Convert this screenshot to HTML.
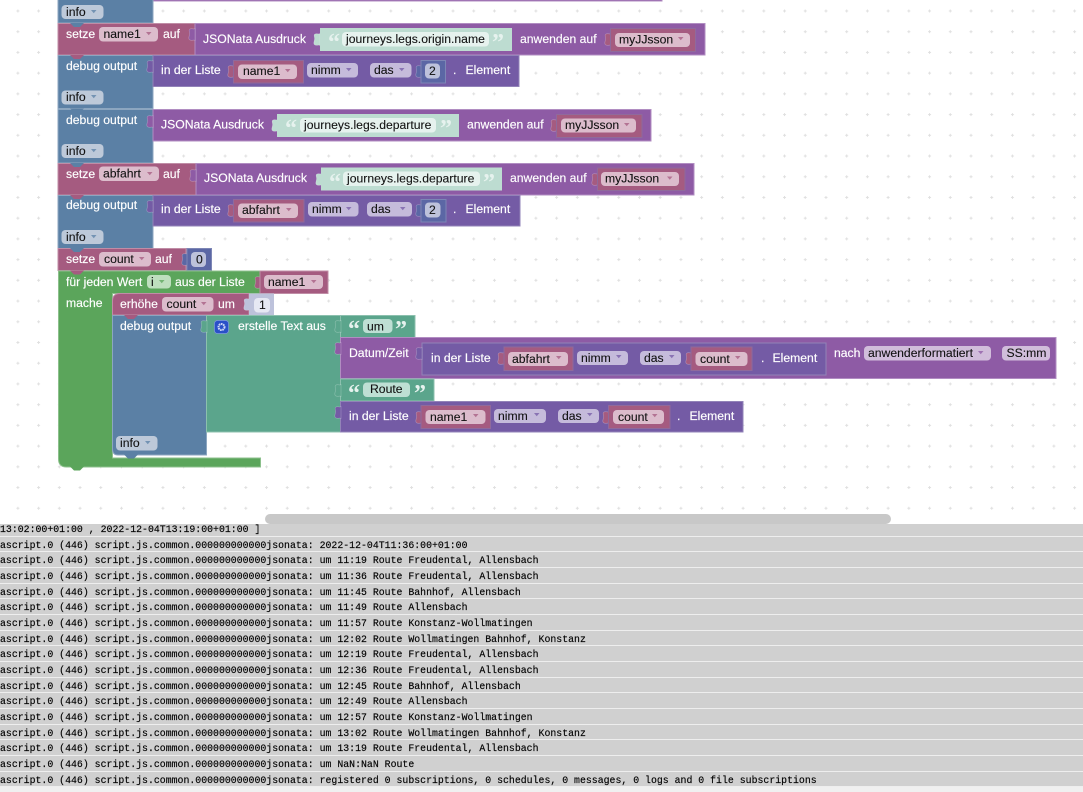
<!DOCTYPE html>
<html><head><meta charset="utf-8">
<style>
html,body{margin:0;padding:0;background:#fff;width:1083px;height:792px;overflow:hidden}
svg{position:absolute;left:0;top:0}
svg text{font-family:"Liberation Sans",Arial,sans-serif;font-size:12.2px}
.t{fill:#fff;stroke:#fff;stroke-width:.15}.d{fill:#111;stroke:#111;stroke-width:.1}
.q{font-family:"Liberation Serif",serif!important;font-size:24px!important;font-weight:bold;fill:#e6f2ee}
.pk{fill:#a55b80;stroke:#c08da6;stroke-width:1}
.pu{fill:#8e5ba5;stroke:#b18dc2;stroke-width:1}
.in{fill:#745ba5;stroke:#9283b8;stroke-width:1}
.bl{fill:#5b80a5;stroke:#8ca6c0;stroke-width:1}
.gr{fill:#5ba55b;stroke:#8cc08c;stroke-width:1}
.te{fill:#5ba58c;stroke:#8cc0ae;stroke-width:1}
.nu{fill:#5b67a5;stroke:#7d86b5;stroke-width:1}
.v{stroke:#8f6a9c}
.st{fill:#bddcd1}
.fs{fill:#e6f2ee}
.fp{fill:#dcbccc}
.fi{fill:#c5bbdb}
.fb{fill:#bdc9d9}
.fu{fill:#d1bddb}
use[href="#tab"]{stroke:rgba(255,255,255,.3);stroke-width:.6}
use[href="#arr"]{opacity:.75}
#log{position:absolute;left:0;top:524px;width:1083px;height:268px;overflow:hidden;background:#f0f0f0}
#log div div{height:14.67px;border-bottom:1px solid #eee;background:#d0d0d0;white-space:pre;font:9.84px/17px "Liberation Mono",monospace;letter-spacing:.02px;color:#000;-webkit-text-stroke:.15px #000}
#in{margin-top:-2.9px}
#sb{position:absolute;left:265px;top:514px;width:626px;height:10px;border-radius:5px;background:#c8c8c8}
</style></head><body>
<svg width="1083" height="792" viewBox="0 0 1083 792" xmlns="http://www.w3.org/2000/svg">
<defs>
<pattern id="g" x="16.4" y="9.5" width="20.72" height="20.72" patternUnits="userSpaceOnUse">
<path d="M0 1.5H3M1.5 0V3" stroke="#e0e0e0" stroke-width="1" fill="none"/>
</pattern>
<path id="tab" d="M7 0C7 2 4 0 2 1C0 2 2 4 1.5 6.500C1 9 0 11 2 12C4 13 7 11 7 13Z"/>
<path id="arr" d="M0 0H5.500L2.750 3.200Z"/>
<path id="nt" d="M0 0L4 4H10L14 0Z"/>
</defs>
<rect width="1083" height="524" fill="#fff"/>
<rect width="1083" height="524" fill="url(#g)"/>

<!-- top strip -->
<rect x="153" y="-5" width="509" height="6" class="pu"/>
<rect x="58" y="-5" width="95" height="28" class="bl"/>
<rect x="61.500" y="5" width="42" height="14" rx="4" class="fb"/><text x="66" y="16" class="d">info</text><use href="#arr" x="91" y="10" fill="#5b80a5"/>

<!-- Row A -->
<rect x="58" y="23.500" width="137" height="31.500" class="pk"/>
<rect x="195" y="23.500" width="510" height="31.500" class="pu"/>
<use href="#nt" x="70" y="23" fill="#5b80a5"/>
<text x="66" y="38" class="t">setze</text>
<rect x="99" y="27" width="59" height="14.500" rx="4" class="fp"/><text x="103.500" y="38" class="d">name1</text><use href="#arr" x="146" y="32" fill="#a55b80"/>
<text x="163" y="38" class="t">auf</text>
<use href="#tab" x="188" y="28" fill="#8e5ba5"/>
<text x="203" y="43" class="t">JSONata Ausdruck</text>
<use href="#tab" x="313" y="33" fill="#bddcd1"/>
<rect x="320" y="28" width="192" height="23" class="st"/>
<text x="328" y="50" class="q" style="fill:#e6f2ee">“</text>
<rect x="342" y="32" width="147" height="14.500" rx="4" class="fs"/><text x="346" y="43" class="d">journeys.legs.origin.name</text>
<text x="492" y="50" class="q">”</text>
<text x="520" y="43" class="t">anwenden auf</text>
<use href="#tab" x="604" y="33" fill="#a55b80"/>
<rect x="610.500" y="28.500" width="85" height="23" class="pk v"/>
<rect x="615" y="33" width="75" height="14" rx="4" class="fp"/><text x="619" y="43.500" class="d">myJJsson</text><use href="#arr" x="678" y="37" fill="#a55b80"/>

<!-- Row B -->
<rect x="58" y="55.500" width="95" height="53" class="bl"/>
<use href="#nt" x="70" y="55" fill="#a55b80"/>
<text x="66" y="70" class="t">debug output</text>
<rect x="153" y="55.500" width="366" height="31" class="in"/>
<use href="#tab" x="146" y="60" fill="#745ba5"/>
<text x="161" y="74" class="t">in der Liste</text>
<use href="#tab" x="227" y="65" fill="#a55b80"/>
<rect x="233.500" y="60.500" width="70" height="22.500" class="pk v"/>
<rect x="238" y="64.500" width="59" height="14.500" rx="4" class="fp"/><text x="243" y="75" class="d">name1</text><use href="#arr" x="285" y="69" fill="#a55b80"/>
<rect x="307" y="63" width="51" height="14.500" rx="4" class="fi"/><text x="311" y="74" class="d">nimm</text><use href="#arr" x="346" y="68" fill="#745ba5"/>
<rect x="370" y="63" width="41.500" height="14.500" rx="4" class="fi"/><text x="374" y="74" class="d">das</text><use href="#arr" x="399" y="68" fill="#745ba5"/>
<use href="#tab" x="415" y="65" fill="#5b67a5"/>
<rect x="421" y="60.500" width="24.500" height="22.500" class="nu"/>
<rect x="425" y="63.500" width="15" height="15" rx="4" fill="#bdc2db"/><text x="429" y="75" class="d">2</text>
<text x="453" y="74" class="t">.</text><text x="465.500" y="74" class="t">Element</text>

<rect x="61.500" y="90.500" width="42" height="14" rx="4" class="fb"/><text x="66" y="101" class="d">info</text><use href="#arr" x="91" y="95" fill="#5b80a5"/>

<!-- Row C -->
<rect x="58" y="109.500" width="95" height="53.500" class="bl"/>
<rect x="153" y="109.500" width="498" height="31.500" class="pu"/>
<use href="#nt" x="70" y="108.500" fill="#5b80a5"/>
<text x="66" y="124" class="t">debug output</text>
<use href="#tab" x="146" y="115" fill="#8e5ba5"/>
<text x="161" y="128.500" class="t">JSONata Ausdruck</text>
<use href="#tab" x="271" y="119" fill="#bddcd1"/>
<rect x="277" y="114" width="182" height="23" class="st"/>
<text x="285" y="136" class="q">“</text>
<rect x="300" y="118" width="136" height="14.500" rx="4" class="fs"/><text x="304" y="129" class="d">journeys.legs.departure</text>
<text x="440" y="136" class="q">”</text>
<text x="467" y="128.500" class="t">anwenden auf</text>
<use href="#tab" x="550" y="119" fill="#a55b80"/>
<rect x="556.500" y="114.500" width="85.500" height="23" class="pk v"/>
<rect x="561" y="118.500" width="75" height="14" rx="4" class="fp"/><text x="565" y="129" class="d">myJJsson</text><use href="#arr" x="624" y="123" fill="#a55b80"/>

<rect x="61.500" y="144" width="42" height="14" rx="4" class="fb"/><text x="66" y="155" class="d">info</text><use href="#arr" x="91" y="149" fill="#5b80a5"/>

<!-- Row D -->
<rect x="58" y="163.500" width="138" height="31.500" class="pk"/>
<rect x="196" y="163.500" width="498" height="31.500" class="pu"/>
<use href="#nt" x="70" y="163" fill="#5b80a5"/>
<text x="66" y="178" class="t">setze</text>
<rect x="99" y="166.500" width="60" height="14.500" rx="4" class="fp"/><text x="103" y="177.500" class="d">abfahrt</text><use href="#arr" x="147" y="172" fill="#a55b80"/>
<text x="163" y="178" class="t">auf</text>
<use href="#tab" x="189" y="169" fill="#8e5ba5"/>
<text x="204" y="182" class="t">JSONata Ausdruck</text>
<use href="#tab" x="315" y="173" fill="#bddcd1"/>
<rect x="321" y="167.500" width="181" height="23" class="st"/>
<text x="329" y="190" class="q">“</text>
<rect x="343" y="171.500" width="137" height="14.500" rx="4" class="fs"/><text x="347" y="182.500" class="d">journeys.legs.departure</text>
<text x="483" y="190" class="q">”</text>
<text x="510" y="182" class="t">anwenden auf</text>
<use href="#tab" x="591" y="173" fill="#a55b80"/>
<rect x="597.500" y="168" width="87.500" height="22.500" class="pk v"/>
<rect x="601" y="172" width="78" height="14" rx="4" class="fp"/><text x="605" y="182.500" class="d">myJJsson</text><use href="#arr" x="667" y="176.500" fill="#a55b80"/>

<!-- Row E -->
<rect x="58" y="195.500" width="95" height="53" class="bl"/>
<use href="#nt" x="70" y="195" fill="#a55b80"/>
<text x="66" y="209" class="t">debug output</text>
<rect x="153" y="195.500" width="367" height="30.500" class="in"/>
<use href="#tab" x="146" y="200" fill="#745ba5"/>
<text x="161" y="213" class="t">in der Liste</text>
<use href="#tab" x="227" y="204" fill="#a55b80"/>
<rect x="233.500" y="199.500" width="70.500" height="22.500" class="pk v"/>
<rect x="238" y="203.500" width="60" height="14.500" rx="4" class="fp"/><text x="242" y="214" class="d">abfahrt</text><use href="#arr" x="286" y="208" fill="#a55b80"/>
<rect x="308" y="202" width="50.500" height="14.500" rx="4" class="fi"/><text x="312" y="213" class="d">nimm</text><use href="#arr" x="346" y="207" fill="#745ba5"/>
<rect x="367" y="202" width="45" height="14.500" rx="4" class="fi"/><text x="371" y="213" class="d">das</text><use href="#arr" x="400" y="207" fill="#745ba5"/>
<use href="#tab" x="415" y="204" fill="#5b67a5"/>
<rect x="421" y="199.500" width="25" height="22.500" class="nu"/>
<rect x="425" y="202.500" width="15.500" height="15" rx="4" fill="#bdc2db"/><text x="429" y="214" class="d">2</text>
<text x="453" y="213" class="t">.</text><text x="465.500" y="213" class="t">Element</text>

<rect x="61.500" y="230" width="42" height="14" rx="4" class="fb"/><text x="66" y="241" class="d">info</text><use href="#arr" x="91" y="235" fill="#5b80a5"/>

<!-- Row F -->
<rect x="58" y="248.500" width="128" height="22" class="pk"/>
<use href="#nt" x="70" y="248" fill="#5b80a5"/>
<text x="66" y="263" class="t">setze</text>
<rect x="99" y="252" width="52" height="14.500" rx="4" class="fp"/><text x="104" y="263" class="d">count</text><use href="#arr" x="139" y="257" fill="#a55b80"/>
<text x="155" y="263" class="t">auf</text>
<use href="#tab" x="181" y="253" fill="#5b67a5"/>
<rect x="187" y="248.500" width="24.500" height="22" class="nu"/>
<rect x="191" y="252" width="15" height="15" rx="4" fill="#bdc2db"/><text x="196" y="263.500" class="d">0</text>

<!-- Loop -->
<path d="M58.500 271H260.500V293.500H112.500V458H260.500V467H66.500Q58.500 467 58.500 459Z" class="gr"/>
<use href="#nt" x="70" y="270.500" fill="#a55b80"/>
<use href="#nt" x="70" y="466.500" fill="#5ba55b"/>
<text x="66" y="286" class="t">für jeden Wert</text>
<rect x="147" y="275" width="24" height="13.500" rx="4" fill="#bedfbe"/><text x="151" y="286" class="d">i</text><use href="#arr" x="159" y="280" fill="#5ba55b"/>
<text x="175" y="286" class="t">aus der Liste</text>
<use href="#tab" x="254" y="276" fill="#a55b80"/>
<rect x="260" y="271" width="68" height="22.500" class="pk"/>
<rect x="264" y="275" width="59" height="14" rx="4" class="fp"/><text x="268" y="286" class="d">name1</text><use href="#arr" x="311" y="280" fill="#a55b80"/>
<text x="66" y="307" class="t">mache</text>

<!-- erhöhe -->
<path d="M112.500 301Q112.500 293.500 120 293.500H249V315H112.500Z" class="pk"/>
<text x="120" y="308" class="t">erhöhe</text>
<rect x="162" y="297" width="51.500" height="14.500" rx="4" class="fp"/><text x="166.500" y="308" class="d">count</text><use href="#arr" x="201" y="302" fill="#a55b80"/>
<text x="218" y="308" class="t">um</text>
<use href="#tab" x="243" y="298" fill="#bdc2db"/>
<rect x="249" y="293.500" width="25" height="22" fill="#bdc2db"/>
<rect x="254" y="298" width="16" height="14.500" rx="4" fill="#e6e8f3"/><text x="259" y="309" class="d">1</text>

<!-- debug inner -->
<path d="M112.500 315.500H206.500V455H118Q112.500 455 112.500 449Z" class="bl"/>
<use href="#nt" x="124" y="315" fill="#a55b80"/>
<use href="#nt" x="124" y="454.500" fill="#5b80a5"/>
<text x="120" y="330" class="t">debug output</text>
<rect x="116" y="436" width="41.500" height="14.500" rx="4" class="fb"/><text x="120" y="447" class="d">info</text><use href="#arr" x="145" y="441" fill="#5b80a5"/>

<!-- text join -->
<rect x="206.500" y="315.500" width="134" height="116.500" class="te"/>
<use href="#tab" x="200" y="320" fill="#5ba58c"/>
<rect x="214.500" y="320.500" width="14" height="13" rx="3" fill="#2a50c8" stroke="#7f97e0" stroke-width="0.700"/>
<circle cx="221.500" cy="327" r="3" fill="none" stroke="#cfdaf7" stroke-width="2" stroke-dasharray="1.600 0.600"/>
<text x="238" y="330" class="t">erstelle Text aus</text>

<rect x="340.500" y="315.500" width="74.500" height="22" class="te"/>
<use href="#tab" x="334" y="320" fill="#5ba58c"/>
<text x="348" y="337" class="q" style="fill:#e6f2ee">“</text>
<rect x="363" y="319" width="29.500" height="14" rx="4" fill="#bedfd4"/><text x="367" y="330.500" class="d">um</text>
<text x="395" y="337" class="q">”</text>

<rect x="340.500" y="337.500" width="715.500" height="41" class="pu"/>
<use href="#tab" x="334" y="342" fill="#8e5ba5"/>
<text x="349" y="357" class="t">Datum/Zeit</text>
<rect x="422" y="343" width="404" height="32" class="in"/>
<use href="#tab" x="415" y="347" fill="#745ba5"/>
<text x="431" y="362" class="t">in der Liste</text>
<use href="#tab" x="497" y="352" fill="#a55b80"/>
<rect x="504" y="347" width="69" height="23.500" class="pk v"/>
<rect x="508" y="352" width="60" height="14" rx="4" class="fp"/><text x="512" y="363" class="d">abfahrt</text><use href="#arr" x="556" y="356" fill="#a55b80"/>
<rect x="577" y="351" width="51" height="14" rx="4" class="fi"/><text x="581" y="362" class="d">nimm</text><use href="#arr" x="616" y="355" fill="#745ba5"/>
<rect x="640" y="351" width="41" height="14" rx="4" class="fi"/><text x="644" y="362" class="d">das</text><use href="#arr" x="669" y="355" fill="#745ba5"/>
<use href="#tab" x="685" y="352" fill="#a55b80"/>
<rect x="691" y="347" width="61" height="23.500" class="pk v"/>
<rect x="695.500" y="352" width="52" height="14" rx="4" class="fp"/><text x="700" y="363" class="d">count</text><use href="#arr" x="735" y="356" fill="#a55b80"/>
<text x="761" y="362" class="t">.</text><text x="772.500" y="362" class="t">Element</text>
<text x="834" y="357" class="t">nach</text>
<rect x="864" y="346" width="127" height="14.500" rx="4" class="fu"/><text x="868" y="357" class="d">anwenderformatiert</text><use href="#arr" x="978" y="351" fill="#8e5ba5"/>
<rect x="1002" y="346" width="48" height="14.500" rx="4" class="fu"/><text x="1006.500" y="357" class="d">SS:mm</text>

<rect x="340.500" y="379" width="93.500" height="22" class="te"/>
<use href="#tab" x="334" y="384" fill="#5ba58c"/>
<text x="348" y="401" class="q">“</text>
<rect x="363" y="382.500" width="47" height="14.500" rx="4" fill="#bedfd4"/><text x="370" y="393" class="d">Route</text>
<text x="414" y="401" class="q">”</text>

<rect x="340.500" y="401.500" width="402.500" height="30.500" class="in"/>
<use href="#tab" x="334" y="406" fill="#745ba5"/>
<text x="349" y="420" class="t">in der Liste</text>
<use href="#tab" x="415" y="411" fill="#a55b80"/>
<rect x="421" y="405.500" width="69.500" height="23" class="pk v"/>
<rect x="425.500" y="410" width="60" height="14" rx="4" class="fp"/><text x="430" y="421" class="d">name1</text><use href="#arr" x="473" y="414" fill="#a55b80"/>
<rect x="494" y="409" width="52" height="14" rx="4" class="fi"/><text x="498" y="420" class="d">nimm</text><use href="#arr" x="534" y="413" fill="#745ba5"/>
<rect x="558" y="409" width="41" height="14" rx="4" class="fi"/><text x="562" y="420" class="d">das</text><use href="#arr" x="587" y="413" fill="#745ba5"/>
<use href="#tab" x="602" y="411" fill="#a55b80"/>
<rect x="608.500" y="405.500" width="61.500" height="23" class="pk v"/>
<rect x="613" y="410" width="51" height="14" rx="4" class="fp"/><text x="618" y="421" class="d">count</text><use href="#arr" x="652" y="414" fill="#a55b80"/>
<text x="677" y="420" class="t">.</text><text x="689.500" y="420" class="t">Element</text>
</svg>
<div id="sb"></div>
<div id="log"><div id="in"><div>13:02:00+01:00 , 2022-12-04T13:19:00+01:00 ]</div><div>ascript.0 (446) script.js.common.000000000000jsonata: 2022-12-04T11:36:00+01:00</div><div>ascript.0 (446) script.js.common.000000000000jsonata: um 11:19 Route Freudental, Allensbach</div><div>ascript.0 (446) script.js.common.000000000000jsonata: um 11:36 Route Freudental, Allensbach</div><div>ascript.0 (446) script.js.common.000000000000jsonata: um 11:45 Route Bahnhof, Allensbach</div><div>ascript.0 (446) script.js.common.000000000000jsonata: um 11:49 Route Allensbach</div><div>ascript.0 (446) script.js.common.000000000000jsonata: um 11:57 Route Konstanz-Wollmatingen</div><div>ascript.0 (446) script.js.common.000000000000jsonata: um 12:02 Route Wollmatingen Bahnhof, Konstanz</div><div>ascript.0 (446) script.js.common.000000000000jsonata: um 12:19 Route Freudental, Allensbach</div><div>ascript.0 (446) script.js.common.000000000000jsonata: um 12:36 Route Freudental, Allensbach</div><div>ascript.0 (446) script.js.common.000000000000jsonata: um 12:45 Route Bahnhof, Allensbach</div><div>ascript.0 (446) script.js.common.000000000000jsonata: um 12:49 Route Allensbach</div><div>ascript.0 (446) script.js.common.000000000000jsonata: um 12:57 Route Konstanz-Wollmatingen</div><div>ascript.0 (446) script.js.common.000000000000jsonata: um 13:02 Route Wollmatingen Bahnhof, Konstanz</div><div>ascript.0 (446) script.js.common.000000000000jsonata: um 13:19 Route Freudental, Allensbach</div><div>ascript.0 (446) script.js.common.000000000000jsonata: um NaN:NaN Route</div><div>ascript.0 (446) script.js.common.000000000000jsonata: registered 0 subscriptions, 0 schedules, 0 messages, 0 logs and 0 file subscriptions</div></div></div>
</body></html>
